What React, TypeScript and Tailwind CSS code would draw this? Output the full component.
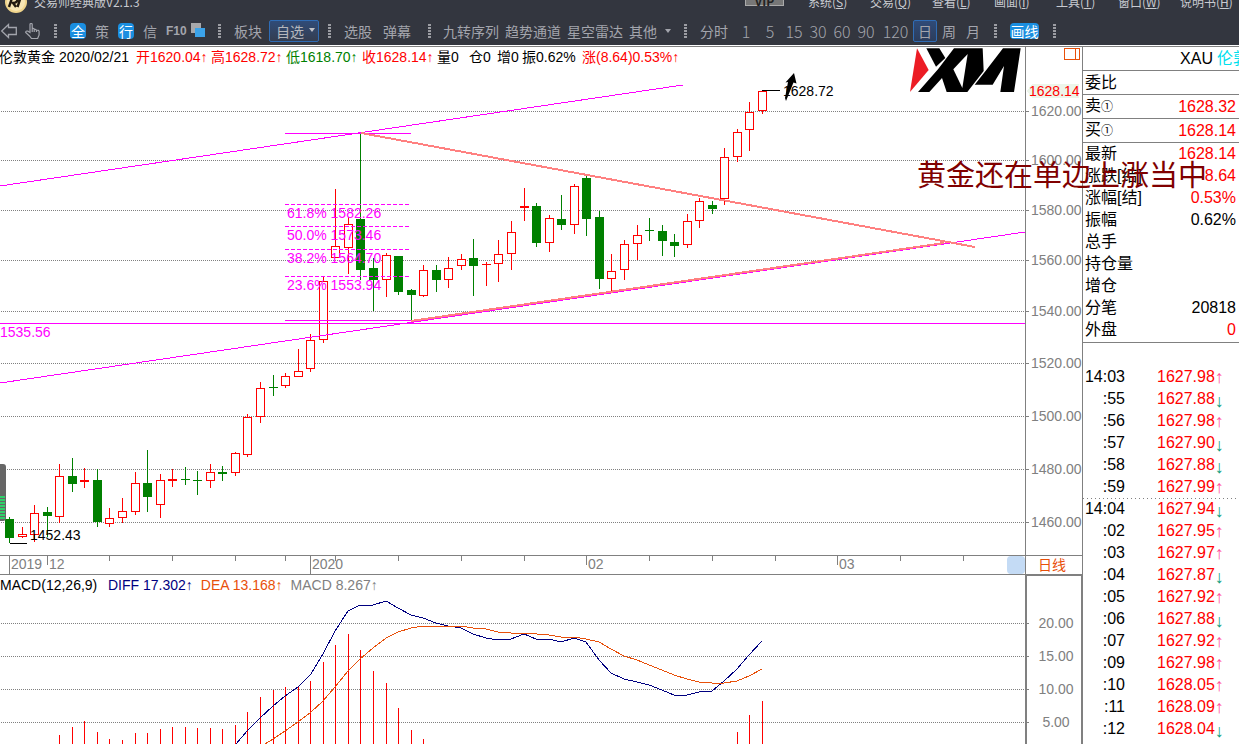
import type { ReactNode } from 'react';

// [centre x, high, body top, body bottom, low, direction]
type Candle = [number, number, number, number, number, 'up' | 'down'];

const CANDLES: Candle[] = [
  [9, 517, 519, 538, 543, 'down'],
  [22, 527, 534, 537, 538, 'up'],
  [34, 505, 513, 535, 542, 'up'],
  [47, 507, 512, 516, 537, 'down'],
  [59, 464, 476, 517, 523, 'up'],
  [72, 458, 476, 484, 492, 'down'],
  [84, 468, 480, 482, 488, 'up'],
  [97, 469, 480, 522, 527, 'down'],
  [109, 508, 518, 524, 527, 'up'],
  [122, 498, 511, 518, 523, 'up'],
  [135, 472, 483, 512, 515, 'up'],
  [147, 450, 483, 497, 512, 'down'],
  [160, 474, 480, 505, 518, 'up'],
  [172, 469, 479, 481, 487, 'up'],
  [185, 467, 479, 480, 485, 'down'],
  [197, 471, 480, 481, 495, 'down'],
  [210, 464, 472, 481, 488, 'up'],
  [222, 466, 472, 474, 481, 'down'],
  [235, 452, 453, 473, 476, 'up'],
  [247, 414, 417, 455, 457, 'up'],
  [260, 382, 388, 417, 423, 'up'],
  [273, 375, 387, 388, 396, 'down'],
  [285, 373, 376, 386, 388, 'up'],
  [298, 349, 371, 377, 377, 'up'],
  [310, 334, 340, 369, 372, 'up'],
  [323, 277, 281, 340, 343, 'up'],
  [335, 189, 246, 258, 258, 'up'],
  [348, 217, 224, 248, 274, 'up'],
  [360, 133, 219, 270, 280, 'down'],
  [373, 258, 268, 280, 311, 'down'],
  [386, 253, 255, 280, 297, 'up'],
  [398, 256, 256, 292, 295, 'down'],
  [411, 289, 290, 295, 320, 'down'],
  [423, 265, 270, 296, 297, 'up'],
  [436, 265, 270, 280, 292, 'down'],
  [448, 257, 268, 280, 288, 'up'],
  [461, 254, 259, 266, 270, 'up'],
  [473, 239, 258, 266, 296, 'down'],
  [486, 262, 264, 265, 286, 'up'],
  [498, 240, 254, 264, 282, 'up'],
  [511, 221, 232, 254, 270, 'up'],
  [524, 188, 206, 208, 221, 'up'],
  [536, 203, 206, 243, 247, 'down'],
  [549, 215, 218, 243, 252, 'up'],
  [561, 195, 219, 225, 230, 'down'],
  [574, 184, 186, 225, 234, 'up'],
  [586, 176, 178, 219, 236, 'down'],
  [599, 211, 217, 279, 289, 'down'],
  [611, 254, 271, 279, 291, 'up'],
  [624, 240, 244, 270, 280, 'up'],
  [637, 225, 235, 244, 260, 'up'],
  [649, 218, 230, 231, 241, 'down'],
  [662, 225, 231, 241, 256, 'down'],
  [674, 234, 242, 246, 257, 'down'],
  [687, 214, 221, 245, 248, 'up'],
  [699, 198, 201, 221, 228, 'up'],
  [712, 201, 205, 209, 214, 'down'],
  [724, 148, 157, 199, 205, 'up'],
  [737, 129, 132, 157, 162, 'up'],
  [749, 102, 112, 130, 151, 'up'],
  [762, 90, 91, 111, 114, 'up'],
];

const PRICE_LEVELS: [number, string][] = [
  [111, '1620.00'],
  [160, '1600.00'],
  [210, '1580.00'],
  [260, '1560.00'],
  [311, '1540.00'],
  [363, '1520.00'],
  [416, '1500.00'],
  [469, '1480.00'],
  [522, '1460.00'],
];

const FIB_LEVELS: [number, string][] = [
  [204, '61.8% 1582.26'],
  [226, '50.0% 1573.46'],
  [249, '38.2% 1564.70'],
  [276, '23.6% 1553.94'],
];

const MACD_LEVELS: [number, string][] = [
  [623, '20.00'],
  [656, '15.00'],
  [689, '10.00'],
  [722, '5.00'],
];

const MACD_BARS: [number, number][] = [
  [59, 735], [72, 727], [84, 721], [97, 732], [109, 739], [122, 740], [135, 733],
  [147, 733], [160, 729], [172, 727], [185, 727], [197, 728], [210, 728], [222, 729],
  [235, 725], [247, 712], [260, 697], [273, 690], [285, 687], [298, 687], [310, 681],
  [323, 662], [335, 645], [348, 634], [360, 650], [373, 671], [386, 683], [398, 708],
  [411, 730], [423, 739], [737, 732], [749, 715], [762, 701],
];

const DIFF_LINE =
  '236,744 247,731 260,718 273,706 285,696 298,687 311,674 323,654 335,631 348,611 360,605 373,605 386,601 398,608 411,615 423,618 436,623 448,626 461,628 473,634 486,638 498,640 511,639 524,634 536,639 549,639 561,642 574,638 586,642 599,660 611,673 624,679 637,682 649,685 662,690 674,695 687,695 699,692 712,691 724,681 737,669 749,655 762,641';

const DEA_LINE =
  '265,744 273,739 285,731 298,722 311,712 323,701 335,687 348,671 360,659 373,648 386,638 398,632 411,628 423,626 461,626 473,628 486,629 498,632 511,633 524,633 549,635 561,637 574,637 586,639 599,642 611,649 624,656 637,660 649,665 662,670 674,675 687,679 699,682 712,683 724,683 737,681 749,676 762,669';

const MONTHS: [number, string][] = [
  [9, '2019'],
  [47, '12'],
  [310, '2020'],
  [586, '02'],
  [837, '03'],
];
const WEEK_TICKS = [109, 172, 235, 285, 335, 398, 461, 524, 649, 712, 775, 900, 963];

const QUOTE_ROWS: [string, string, string][] = [
  ['最新', '1628.14', 'text-[#ff0000]'],
  ['涨跌[结]', '8.64', 'text-[#ff0000]'],
  ['涨幅[结]', '0.53%', 'text-[#ff0000]'],
  ['振幅', '0.62%', 'text-black'],
  ['总手', '', 'text-black'],
  ['持仓量', '', 'text-black'],
  ['增仓', '', 'text-black'],
  ['分笔', '20818', 'text-black'],
  ['外盘', '0', 'text-[#ff0000]'],
];

const TRADES: [string, string, 'up' | 'down'][] = [
  ['14:03', '1627.98', 'up'],
  [':55', '1627.88', 'down'],
  [':56', '1627.98', 'up'],
  [':57', '1627.90', 'down'],
  [':58', '1627.88', 'down'],
  [':59', '1627.99', 'up'],
  ['14:04', '1627.94', 'down'],
  [':02', '1627.95', 'up'],
  [':03', '1627.97', 'up'],
  [':04', '1627.87', 'down'],
  [':05', '1627.92', 'up'],
  [':06', '1627.88', 'down'],
  [':07', '1627.92', 'up'],
  [':09', '1627.98', 'up'],
  [':10', '1628.05', 'up'],
  [':11', '1628.09', 'up'],
  [':12', '1628.04', 'down'],
];

const MENUS = ['系统(S)', '交易(Q)', '查看(L)', '画面(I)', '工具(T)', '窗口(W)', '说明书(H)'];
const PERIODS = ['1', '5', '15', '30', '60', '90'];

function Separator({ className }: { className: string }) {
  return (
    <svg className={`w-[3px] h-4 shrink-0 ${className}`} shapeRendering="crispEdges">
      {[1, 4, 7, 10, 13].map((y) => (
        <rect key={y} x="0" y={y} width="3" height="2" fill="#9c9da3" />
      ))}
    </svg>
  );
}

function Tool({ children, className = '' }: { children: ReactNode; className?: string }) {
  return (
    <button type="button" className={`shrink-0 whitespace-nowrap leading-5 ${className}`}>
      {children}
    </button>
  );
}

function TitleBar() {
  return (
    <div className="h-4 overflow-hidden">
      <div className="-mt-2.5 flex h-6 items-center text-[12px] text-[#c8cad0]">
        <svg className="ml-[5px] h-6 w-[22px] shrink-0" viewBox="0 0 22 24">
          <circle cx="11" cy="12" r="11" fill="#f1d58c" />
          <circle cx="11" cy="12" r="9" fill="#f8e6b4" />
          <path d="M4 17 7 8h3q3 0 2 3-1 2-4 2l3 4M11 8h8M15.500 8l-3 9" fill="none" stroke="#221a10" strokeWidth="2.4" />
        </svg>
        <span className="ml-[7px] whitespace-nowrap leading-4">交易师经典版V2.1.3</span>
        <span className="ml-auto h-4 w-[39px] self-start border border-[#aaa] bg-[#777] text-center font-bold leading-5 text-[#222]">
          VIP
        </span>
        <nav className="-mr-[3px] ml-6 flex h-5 items-start">
          {MENUS.map((menu) => (
            <button key={menu} type="button" className="w-[62px] shrink-0 whitespace-nowrap text-left leading-5">
              {menu.slice(0, -2)}
              <span className="underline">{menu.slice(-2, -1)}</span>)
            </button>
          ))}
        </nav>
      </div>
    </div>
  );
}

function Toolbar() {
  return (
    <div className="flex h-[29px] items-center overflow-hidden text-[14px] text-[#a3a5ad]">
      <button type="button" aria-label="返回" className="ml-px shrink-0">
        <svg className="block h-4 w-4" viewBox="0 0 16 16" fill="none" stroke="#a3a5ad" strokeWidth="1.3">
          <path d="M.7 8 7.500 1.500v3h7.800v7H7.500v3z" />
        </svg>
      </button>
      <button type="button" aria-label="拖动" className="ml-2 shrink-0">
        <svg className="block h-4 w-4" viewBox="0 0 16 16" fill="none" stroke="#a3a5ad" strokeWidth="1.2">
          <path d="M5 9.500V1.600q0-1.100 1.100-1.100T7.200 1.600V7V5.500q2-.6 2 1 2-.6 2.200 1 2.700-.8 2.700 1V12l-1.500 3.500H6.500L4.500 13 .7 9.500Q.6 7.500 3 8.200zM7.200 5.500v3.500M9.200 6.500V9M11.500 7.500V9" />
        </svg>
      </button>
      <Separator className="mx-[13px]" />
      <div className="flex shrink-0 items-center gap-[9px]">
        <Tool className="h-4 w-4 rounded bg-[#1a8ee0] text-white !leading-4">全</Tool>
        <Tool>策</Tool>
        <Tool className="h-4 w-4 rounded bg-[#1a8ee0] text-white !leading-4">行</Tool>
        <Tool>信</Tool>
        <Tool className="w-4 font-['Liberation_Sans_Narrow','Liberation_Sans',sans-serif] text-[12px] font-bold">F10</Tool>
        <button type="button" aria-label="窗口布局">
          <svg className="block h-4 w-[14px]" shapeRendering="crispEdges">
            <rect x="0" y="0" width="10" height="10" fill="#a7a8ab" />
            <rect x="4" y="5" width="10" height="9" fill="#3ba3ea" />
          </svg>
        </button>
      </div>
      <Separator className="mx-[13px]" />
      <Tool className="mr-[7px]">板块</Tool>
      <div className="relative h-[22px] w-[50px] shrink-0">
        <select
          aria-label="自选"
          className="h-full w-full appearance-none rounded-xs border border-[#2f6cb5] bg-linear-to-b from-[#2f4b78] to-[#343d50] pl-1.5 leading-5 text-[#b4b6bd]"
        >
          <option>自选</option>
        </select>
        <svg className="pointer-events-none absolute right-1 top-2 h-1 w-[6px]" viewBox="0 0 6 4">
          <path d="M0 0h6L3 4z" fill="#c0c2c8" />
        </svg>
      </div>
      <Separator className="ml-[9px] mr-[13px]" />
      <div className="flex shrink-0 gap-[11px]">
        <Tool>选股</Tool>
        <Tool>弹幕</Tool>
      </div>
      <Separator className="ml-[17px] mr-3" />
      <div className="flex shrink-0 items-center gap-1.5">
        <Tool>九转序列</Tool>
        <Tool>趋势通道</Tool>
        <Tool>星空雷达</Tool>
        <Tool className="flex items-center gap-2">
          其他
          <svg className="h-1 w-[6px]" viewBox="0 0 6 4">
            <path d="M0 0h6L3 4z" fill="#a3a5ad" />
          </svg>
        </Tool>
      </div>
      <Separator className="mx-[13px]" />
      <Tool className="mr-1.5">分时</Tool>
      <div className="flex shrink-0 font-light">
        {PERIODS.map((p) => (
          <Tool key={p} className="w-6 text-center text-[16px]">
            {p}
          </Tool>
        ))}
        <Tool className="w-[35px] text-center text-[16px]">120</Tool>
      </div>
      <Tool className="h-[22px] w-6 rounded-xs border border-[#2f6cb5] bg-linear-to-b from-[#2f4b78] to-[#2c3d5c]">日</Tool>
      <Tool className="w-6">周</Tool>
      <Tool className="w-6">月</Tool>
      <Separator className="ml-[9px] mr-[13px]" />
      <Tool className="h-4 w-[29px] rounded bg-[#1a8ee0] text-white !leading-4">画线</Tool>
      <Separator className="mx-[14px]" />
    </div>
  );
}

function InfoBar() {
  return (
    <div className="flex h-5 items-center whitespace-nowrap text-[14px] leading-5 text-black">
      <span className="-ml-px w-[60px]">伦敦黄金</span>
      <span className="w-[77px]">2020/02/21</span>
      <span className="w-[75px] text-[#ff0000]">开1620.04↑</span>
      <span className="w-[75px] text-[#ff0000]">高1628.72↑</span>
      <span className="w-[76px] text-[#008000]">低1618.70↑</span>
      <span className="w-[75px] text-[#ff0000]">收1628.14↑</span>
      <span className="w-8">量0</span>
      <span className="w-7">仓0</span>
      <span className="w-[25px]">增0</span>
      <span className="w-[60px]">振0.62%</span>
      <span className="text-[#ff0000]">涨(8.64)0.53%↑</span>
    </div>
  );
}

function CandleMark({ candle }: { candle: Candle }) {
  const [x, high, top, bottom, low, dir] = candle;
  const color = dir === 'up' ? '#ff0000' : '#008000';
  const hollow = dir === 'up' && bottom - top > 2;
  return (
    <g fill={color}>
      {hollow ? (
        <>
          <rect x={x} y={high} width="1" height={top - high} />
          <rect x={x} y={bottom} width="1" height={low - bottom} />
          <rect x={x - 3.5} y={top + 0.5} width="8" height={bottom - top - 1} fill="#fff" stroke={color} />
        </>
      ) : (
        <>
          <rect x={x} y={high} width="1" height={low - high} />
          <rect x={x - 4} y={top} width="9" height={bottom - top} />
        </>
      )}
    </g>
  );
}

function PriceChart() {
  return (
    <svg className="block h-[488px] w-full" fontSize="14" shapeRendering="crispEdges">
      <g transform="translate(0,-67)">
        {PRICE_LEVELS.map(([y]) => (
          <line key={y} x1="1" x2="100%" y1={y + 0.5} y2={y + 0.5} stroke="#808080" strokeDasharray="1 1" />
        ))}
        {CANDLES.map((c) => (
          <CandleMark key={c[0]} candle={c} />
        ))}

        {/* Channel, base line and Fibonacci levels */}
        <g stroke="#ff00ff">
          <line x1="0" y1="186" x2="683" y2="85" />
          <line x1="0" y1="383" x2="1025" y2="232" />
          <line x1="0" y1="323.5" x2="100%" y2="323.5" />
          <line x1="285" y1="133.5" x2="411" y2="133.5" />
          <line x1="285" y1="320.5" x2="411" y2="320.5" />
          {FIB_LEVELS.map(([y]) => (
            <line key={y} x1="285" x2="409" y1={y + 0.5} y2={y + 0.5} strokeDasharray="4 2" />
          ))}
        </g>
        <g fill="#ff00ff">
          {FIB_LEVELS.map(([y, label]) => (
            <text key={y} x="287" y={y + 14}>
              {label}
            </text>
          ))}
          <text x="0" y="337">1535.56</text>
        </g>

        {/* Converging trend lines */}
        <g stroke="#ff8080" strokeWidth="2">
          <line x1="361" y1="133" x2="975" y2="247" />
          <line x1="411" y1="321" x2="944" y2="243" />
        </g>

        <rect x="762" y="90" width="18" height="1" />
        <text x="783" y="96">1628.72</text>
        <rect x="10" y="543" width="17" height="1" />
        <text x="30" y="540">1452.43</text>
        <path d="M794 73 796.500 83.500 793.500 82.500 786 101 785 98 788 82 785.500 82.500z" shapeRendering="auto" />

        {/* Level meter docked on the left edge */}
        <g shapeRendering="auto">
          <rect x="-6" y="464" width="12" height="57" rx="3" fill="#666" />
          {[496, 499, 502, 505, 508, 511, 514, 517].map((y) => (
            <rect key={y} x="0" y={y} width="5" height="2" fill="#2fd06a" />
          ))}
        </g>
      </g>
    </svg>
  );
}

function PriceAxis() {
  return (
    <svg className="block h-[508px] w-full" fontSize="14" shapeRendering="crispEdges">
      <g transform="translate(0,-47)">
        <path d="M38.500 48.500h15v11h-15zM49.500 48.500v11" fill="none" stroke="#e8500a" />
        <path d="M1 91 6 84H53V98H6z" fill="#edf5ea" />
        <text x="3" y="96" fill="#ff0000">1628.14</text>
        {PRICE_LEVELS.map(([y, label]) => (
          <g key={y} fill="#808080">
            <rect x="0" y={y} width="3" height="1" />
            <text x="5" y={y + 5}>{label}</text>
          </g>
        ))}
      </g>
    </svg>
  );
}

function DateAxis() {
  return (
    <svg className="block h-full w-full" fontSize="14" fill="#808080" shapeRendering="crispEdges">
      {MONTHS.map(([x, label]) => (
        <g key={label}>
          <rect x={x} y="0" width="1" height={label.length > 2 ? 18 : 9} />
          <text x={x + 2} y="13">{label}</text>
        </g>
      ))}
      {WEEK_TICKS.map((x) => (
        <rect key={x} x={x} y="0" width="1" height="5" />
      ))}
    </svg>
  );
}

function MacdChart() {
  return (
    <svg className="block min-h-0 w-full flex-1" shapeRendering="crispEdges">
      <g transform="translate(0,-595)">
        {MACD_LEVELS.map(([y]) => (
          <line key={y} x1="1" x2="100%" y1={y + 0.5} y2={y + 0.5} stroke="#808080" strokeDasharray="1 1" />
        ))}
        {MACD_BARS.map(([x, y]) => (
          <rect key={x} x={x} y={y} width="1" height={760 - y} fill="#ff0000" />
        ))}
        <polyline points={DIFF_LINE} fill="none" stroke="#000080" />
        <polyline points={DEA_LINE} fill="none" stroke="#e8500a" />
      </g>
    </svg>
  );
}

function BrandLogo() {
  return (
    <svg className="absolute right-0 top-0 h-12 w-[121px]" viewBox="0 9 363 144">
      <path d="M39 13 74 78 18 144z" fill="#ec1c24" />
      <path d="M67 13h39l18 29-28 26z" />
      <path d="M150 13h86l3 68-49 63h-62l-14-42-38 42H42l60-68z" />
      <path d="M191 30 148 76l27 56z" fill="#fff" />
      <path d="M297 13h53l-20 131h-41l11-78-34 56h-54l32-40z" />
    </svg>
  );
}

function QuotePanel() {
  return (
    <aside className="w-[157px] shrink-0 overflow-hidden border-l border-[#808080] text-[16px] text-black">
      <h1 className="flex h-6 items-center justify-end overflow-hidden whitespace-nowrap border-b border-[#808080]">
        <span className="shrink-0">XAU</span>
        <span className="ml-1 w-[22px] overflow-hidden text-[#00dfee]">伦敦黄金</span>
      </h1>
      <dl className="leading-[22px]">
        <div className="flex h-6 items-center border-b border-[#808080] pl-0.5">
          <dt>委比</dt>
        </div>
        <div className="flex h-6 items-center justify-between border-b border-[#808080] pl-0.5 pr-[3px]">
          <dt>卖<span className="text-[12px]">①</span></dt>
          <dd className="text-[#ff0000]">1628.32</dd>
        </div>
        <div className="flex h-6 items-center justify-between border-b border-[#808080] pl-0.5 pr-[3px]">
          <dt>买<span className="text-[12px]">①</span></dt>
          <dd className="text-[#ff0000]">1628.14</dd>
        </div>
        <div className="border-b border-[#808080] pb-px">
          {QUOTE_ROWS.map(([label, value, color]) => (
            <div key={label} className="flex h-[22px] items-center justify-between pl-0.5 pr-[3px]">
              <dt>{label}</dt>
              <dd className={color}>{value}</dd>
            </div>
          ))}
        </div>
      </dl>
      <table className="mt-[23px] w-full border-separate border-spacing-0 leading-[22px]">
        <tbody>
          {TRADES.map(([time, price, dir]) => (
            <tr
              key={time}
              className={
                time === '14:04'
                  ? 'h-[22px] bg-[repeating-linear-gradient(90deg,#808080_0_1px,transparent_1px_4px)] bg-[length:100%_1px] bg-no-repeat'
                  : 'h-[22px]'
              }
            >
              <td className="w-[42px] p-0 text-right">{time}</td>
              <td className="p-0 pl-8 text-[#ff0000]">
                <div className="flex h-[22px]">
                  {price}
                  {dir === 'up' ? (
                    <span className="text-[18px] text-[#ff4f9a]">↑</span>
                  ) : (
                    <span className="pt-0.5 text-[18px] text-[#10a080]">↓</span>
                  )}
                </div>
              </td>
            </tr>
          ))}
        </tbody>
      </table>
    </aside>
  );
}

export default function App() {
  return (
    <div className="flex h-screen flex-col overflow-hidden bg-white font-['Liberation_Sans','Noto_Sans_CJK_SC',sans-serif]">
      <header className="shrink-0 border-b border-white bg-[#33363f] font-['Noto_Sans_CJK_SC',sans-serif]">
        <TitleBar />
        <Toolbar />
      </header>

      <main className="relative flex min-h-0 flex-1 border-t border-[#808080]">
        <div className="flex min-w-0 flex-1 flex-col">
          <section className="flex shrink-0">
            <div className="relative min-w-0 flex-1 overflow-hidden">
              <InfoBar />
              <PriceChart />
              <BrandLogo />
            </div>
            <div className="w-[57px] shrink-0 border-l border-[#808080]">
              <PriceAxis />
            </div>
          </section>

          <section className="flex h-5 shrink-0 border-y border-[#808080]">
            <div className="relative min-w-0 flex-1">
              <DateAxis />
              <span className="absolute right-0 top-0 h-full w-[18px] rounded-sm bg-[#c4dbf5]" />
            </div>
            <button type="button" className="w-[57px] shrink-0 border-l border-[#808080] pr-1 text-[14px] leading-[18px] text-[#e8500a]">
              日线
            </button>
          </section>

          <section className="flex min-h-0 flex-1">
            <div className="flex min-w-0 flex-1 flex-col">
              <div className="flex h-5 shrink-0 gap-2 whitespace-nowrap text-[14px] leading-5">
                <span className="w-[100px] text-black">MACD(12,26,9)</span>
                <span className="text-[#000080]">DIFF 17.302↑</span>
                <span className="text-[#e8500a]">DEA 13.168↑</span>
                <span className="text-[#808080]">MACD 8.267↑</span>
              </div>
              <MacdChart />
            </div>
            <div className="w-[57px] shrink-0 border-l-2 border-r border-t border-[#808080]">
              <svg className="block h-full w-full" fontSize="14" fill="#808080" shapeRendering="crispEdges">
                <g transform="translate(0,-576)">
                  {MACD_LEVELS.map(([y, label]) => (
                    <g key={y}>
                      <rect x="0" y={y} width="2" height="1" />
                      <text x="29" y={y + 5} textAnchor="middle">{label}</text>
                    </g>
                  ))}
                </g>
              </svg>
            </div>
          </section>
        </div>

        <QuotePanel />

        <p className="pointer-events-none absolute right-8 top-[109px] whitespace-nowrap text-[29px] leading-10 text-[#800000]">
          黄金还在单边上涨当中
        </p>
      </main>
    </div>
  );
}
